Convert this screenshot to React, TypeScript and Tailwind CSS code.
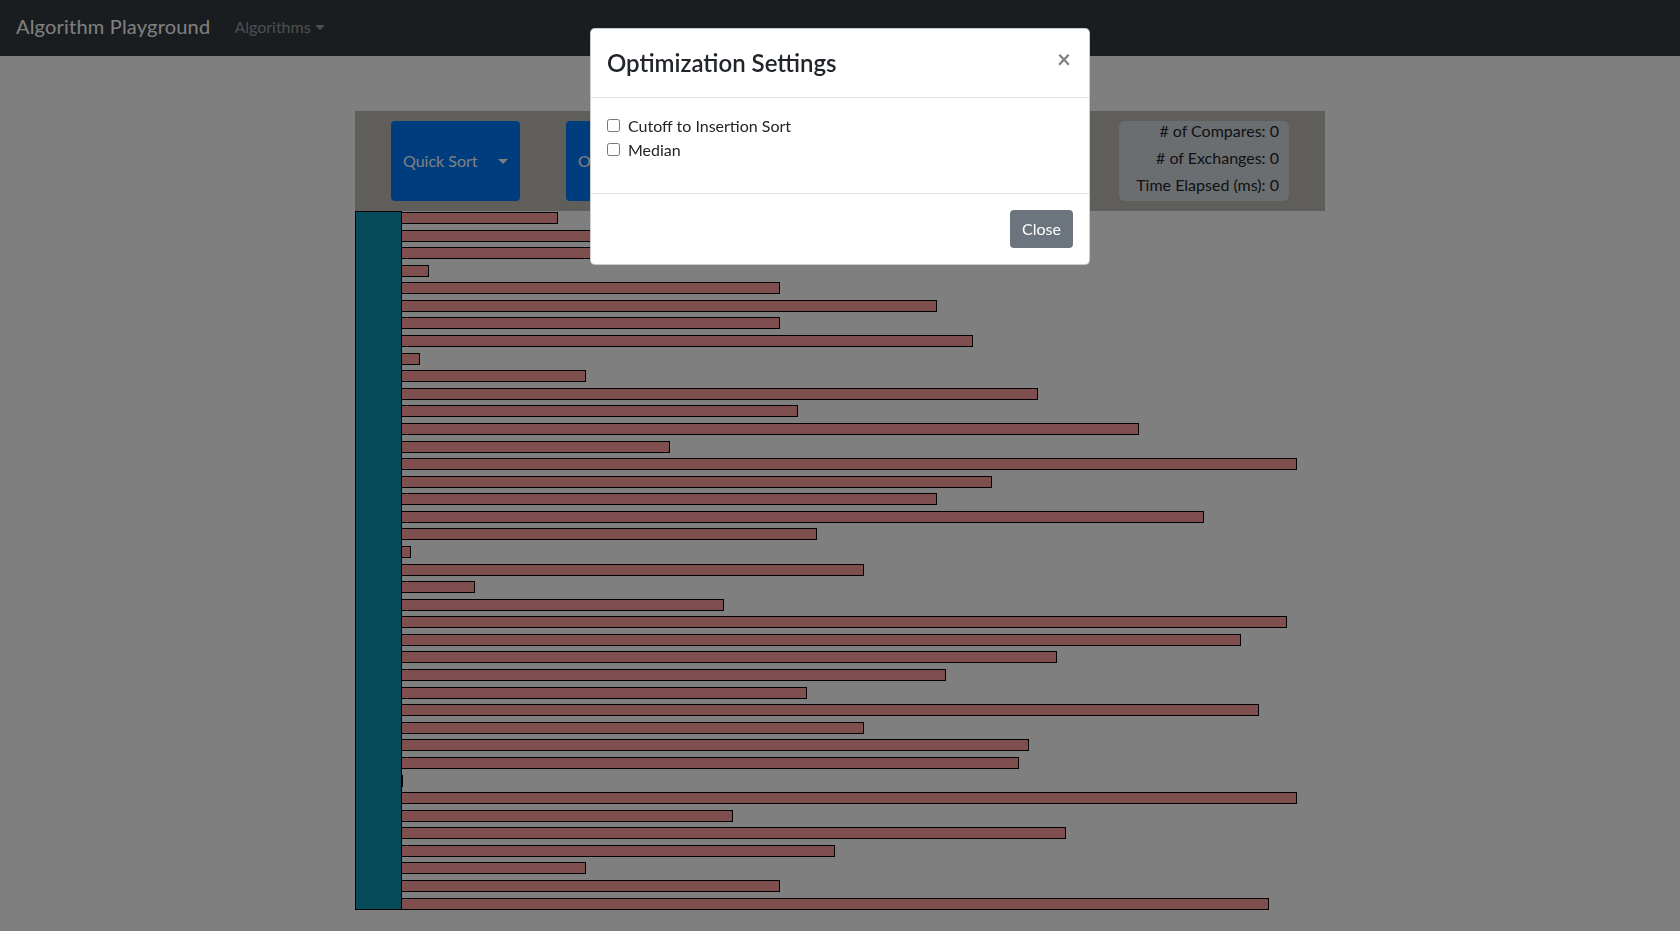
import React from "react";

// bar lengths in px, read off the current (unsorted) array
const bars: number[] = [
  156, 420, 500, 27, 378, 535, 378, 571, 18, 184, 636, 396, 737, 268, 895, 590,
  535, 802, 415, 9, 462, 73, 322, 885, 839, 655, 544, 405, 857, 462, 627, 617,
  1, 895, 331, 664, 433, 184, 378, 867,
];

const Caret = () => (
  <span className="inline-block ml-[4px] align-[3px] w-0 h-0 border-t-[5px] border-t-current border-x-[5px] border-x-transparent" />
);

const Navbar = () => (
  <nav className="h-[56px] bg-[#343a40] flex items-center px-4">
    <span className="text-[20px] text-white mr-4 leading-[30px] pb-[7px] pt-[3px] tracking-[0.2px]">
      Algorithm Playground
    </span>
    <span className="text-[16px] text-white/50 px-2 pb-[2px] flex items-center">
      Algorithms
      <Caret />
    </span>
  </nav>
);

const Controls = () => (
  <div className="w-[970px] mx-auto mt-[55px] h-[100px] bg-[#bfbcb4] flex items-center pl-[36px] pr-[36px]">
    <button className="h-[80px] w-[129px] rounded bg-[#007bff] text-white text-[16px] flex items-center justify-between px-3">
      <span>Quick Sort</span>
      <Caret />
    </button>
    <button className="ml-[46px] h-[80px] w-[190px] rounded bg-[#007bff] text-white text-[16px] px-3 text-left">
      Optimizations
    </button>
    <div className="ml-auto w-[170px] h-[80px] rounded-md bg-[#d7dce3] text-[#212529] text-[16px] text-right px-[10px] leading-[27px] whitespace-nowrap">
      <div className="mt-[-4px]">
        <div># of Compares: 0</div>
        <div># of Exchanges: 0</div>
        <div>Time Elapsed (ms): 0</div>
      </div>
    </div>
  </div>
);

const Bars = () => (
  <div className="w-[970px] mx-auto flex">
    <div className="w-[47px] h-[699px] bg-[#0e94b4] border border-black" />
    <div className="h-[699px] pt-[1px] flex flex-col justify-between">
      {bars.map((w, i) => (
        <div
          key={i}
          className="h-[12px] bg-[#ff9f9f] border-y border-r border-black"
          style={{ width: w }}
        />
      ))}
    </div>
  </div>
);

const SettingsModal = () => (
  <>
    <div className="fixed inset-0 bg-black/50" />
    <div className="fixed top-[28px] left-1/2 -translate-x-1/2 w-[500px] bg-white rounded-[5px] border border-black/20 text-[#212529]">
      <div className="flex items-start justify-between p-4 border-b border-[#dee2e6]">
        <h5 className="text-[24px] font-semibold leading-[36px]">Optimization Settings</h5>
        <button className="text-[24px] font-bold leading-none text-black/50 mt-[-4px] mr-[2px] pt-[6px]">×</button>
      </div>
      <div className="px-4 pt-4 pb-8 text-[16px] leading-[23px]">
        <label className="flex items-center">
          <input type="checkbox" className="w-[13px] h-[13px] mr-[8px]" />
          <span>Cutoff to Insertion Sort</span>
        </label>
        <label className="flex items-center mt-[1px]">
          <input type="checkbox" className="w-[13px] h-[13px] mr-[8px]" />
          <span>Median</span>
        </label>
      </div>
      <div className="flex justify-end p-4 border-t border-[#dee2e6]">
        <button className="h-[38px] px-3 rounded bg-[#6c757d] text-white text-[16px]">Close</button>
      </div>
    </div>
  </>
);

export default function App() {
  return (
    <div className="min-h-[931px] bg-white font-['Lato',sans-serif]">
      <Navbar />
      <Controls />
      <Bars />
      <SettingsModal />
    </div>
  );
}
